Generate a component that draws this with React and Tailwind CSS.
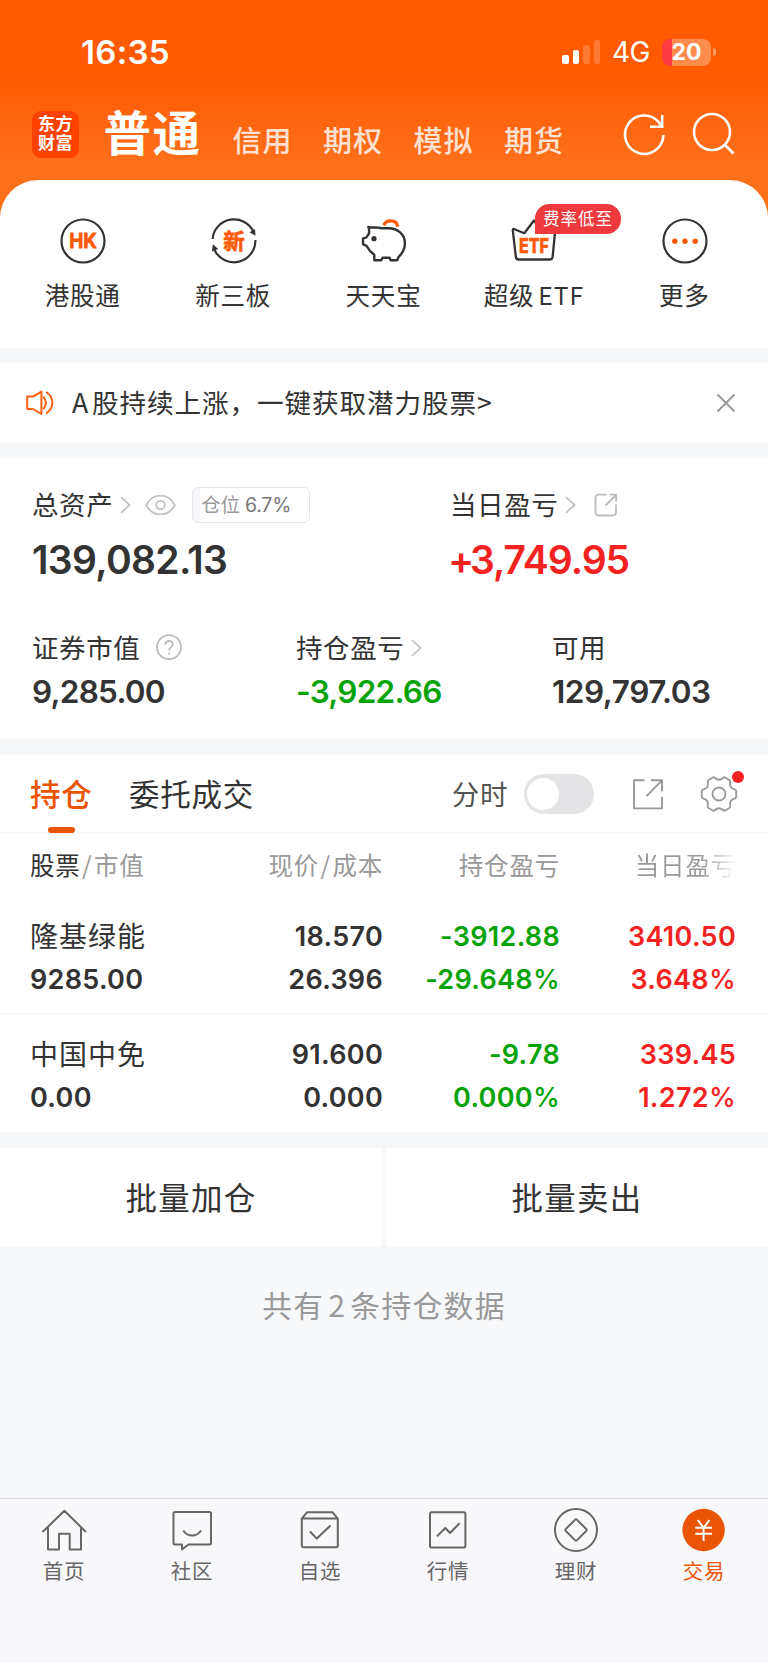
import React from 'react';

const shortcuts = [
  { label: '港股通', icon: <HkIcon /> },
  { label: '新三板', icon: <NewBoardIcon /> },
  { label: '天天宝', icon: <PiggyIcon /> },
  { label: '超级', latin: 'ETF', icon: <EtfIcon />, badge: '费率低至' },
  { label: '更多', icon: <MoreIcon /> },
];

const positions = [
  {
    name: '隆基绿能',
    value: '9285.00',
    price: '18.570',
    cost: '26.396',
    profit: '-3912.88',
    profitRate: '-29.648',
    today: '3410.50',
    todayRate: '3.648',
  },
  {
    name: '中国中免',
    value: '0.00',
    price: '91.600',
    cost: '0.000',
    profit: '-9.78',
    profitRate: '0.000',
    today: '339.45',
    todayRate: '1.272',
  },
];

const navItems = [
  { label: '首页', icon: <HomeIcon /> },
  { label: '社区', icon: <CommunityIcon /> },
  { label: '自选', icon: <WatchlistIcon /> },
  { label: '行情', icon: <MarketIcon /> },
  { label: '理财', icon: <WealthIcon /> },
  { label: '交易', icon: <TradeIcon />, active: true },
];

/* Shortcut icons */
function HkIcon() {
  return (
    <svg className="w-12 h-12" viewBox="0 0 48 48" fill="none">
      <circle cx="24" cy="24" r="21.5" stroke="#333" strokeWidth="2.2" />
      <text x="10.2" y="31.2" textLength="27.6" lengthAdjust="spacingAndGlyphs" fontSize="20" fontWeight="700" fill="#ff5a05" stroke="#ff5a05" strokeWidth="0.8" strokeLinejoin="round" className="font-['Inter',sans-serif]">HK</text>
    </svg>
  );
}

function NewBoardIcon() {
  return (
    <svg className="w-12 h-12" viewBox="0 0 48 48" fill="none">
      <path d="M2.6 22A21.5 21.5 0 0 1 43.4 14.5M45.4 23A21.5 21.5 0 0 1 4.6 33.2" stroke="#333" strokeWidth="2.2" />
      <path d="M39.6 15.2L45 12L45.5 18.8ZM2 34.5L2.8 27.2L8.2 32Z" fill="#333" />
      <text x="13.2" y="31.5" fontSize="21.5" fontWeight="700" fill="#ff5a05" stroke="#ff5a05" strokeWidth="0.6" className="font-['Noto_Sans_CJK_SC',sans-serif]">新</text>
    </svg>
  );
}

function PiggyIcon() {
  return (
    <svg className="w-12 h-12" viewBox="0 0 48 48" fill="none" strokeWidth="2.4" strokeLinejoin="round" strokeLinecap="round">
      <path
        d="M21.5 11.2L18 10.6C14.5 10 11.5 11.2 8.3 9.9C9.4 12.1 9.3 14.3 9 16.5L6.2 20.6L3 21.4V27.2L6.5 28.8C8.3 32.4 10.8 35.4 14.3 37.8V43.2H21.3L22.6 40.8H29.6L30.6 43.2H37.2L38.4 40.2C42 36.7 44.9 32 44.9 26.2C44.9 17.2 37.6 11.2 28.6 11.2Z"
        stroke="#333"
      />
      <circle cx="14" cy="21.7" r="2.6" fill="#333" />
      <path d="M23.8 8.2C25.2 5 28 3.9 31 3.9C34.6 3.9 37.2 6.2 37.8 9.8" stroke="#ff5a05" strokeWidth="3.4" strokeLinecap="butt" />
    </svg>
  );
}

function EtfIcon() {
  return (
    <svg className="w-12 h-12" viewBox="0 0 48 48" fill="none">
      <path d="M4 12L14.3 16.2L24 3.5L33.7 16.2L44 12Q45.4 11.7 45.2 13.5L42.6 40Q42.3 42.5 40 42.5H8.5Q6.2 42.5 5.9 40L2.8 13.5Q2.6 11.6 4 12Z" stroke="#333" strokeWidth="2.3" strokeLinejoin="round" />
      <text x="9" y="35.5" textLength="30" lengthAdjust="spacingAndGlyphs" fontSize="20.5" fontWeight="800" fill="#ff5a05" stroke="#ff5a05" strokeWidth="0.5" strokeLinejoin="round" className="font-['Inter',sans-serif]">ETF</text>
    </svg>
  );
}

function MoreIcon() {
  return (
    <svg className="w-12 h-12" viewBox="0 0 48 48" fill="none">
      <circle cx="24" cy="24" r="21.5" stroke="#333" strokeWidth="2.2" />
      <g fill="#ff5a05">
        <circle cx="13.8" cy="24.2" r="2.7" />
        <circle cx="24" cy="24.2" r="2.7" />
        <circle cx="34.2" cy="24.2" r="2.7" />
      </g>
    </svg>
  );
}

/* Bottom navigation icons */
function HomeIcon() {
  return (
    <svg className="w-12 h-12" viewBox="0 0 48 48" fill="none" stroke="#666" strokeWidth="2" strokeLinejoin="round">
      <path d="M2.5 26L24.4 4.8L46 26M8 21.5V43.5H19V27.8H29.7V43.5H41V21.5" />
    </svg>
  );
}

function CommunityIcon() {
  return (
    <svg className="w-12 h-12" viewBox="0 0 48 48" fill="none" stroke="#666" strokeWidth="2" strokeLinejoin="round">
      <path d="M7 6H41.5Q43 6 43 7.5V37Q43 38.5 41.5 38.5H20.5L14 43.5V38.5H7Q5.5 38.5 5.5 37V7.5Q5.5 6 7 6Z" />
      <path d="M15.3 24.5C19.5 31.2 28.8 31.2 33 24.5" />
    </svg>
  );
}

function WatchlistIcon() {
  return (
    <svg className="w-12 h-12" viewBox="0 0 48 48" fill="none" stroke="#666" strokeWidth="2" strokeLinejoin="round">
      <path d="M5.8 12.6L11 6.3H36.6L41.8 12.6V39.5Q41.8 41.3 40 41.3H7.6Q5.8 41.3 5.8 39.5ZM5.8 12.6H41.8M14 25.5L20.8 32.6L34.5 19.6" />
    </svg>
  );
}

function MarketIcon() {
  return (
    <svg className="w-12 h-12" viewBox="0 0 48 48" fill="none" stroke="#666" strokeWidth="2" strokeLinejoin="round">
      <rect x="6" y="6.2" width="35.4" height="35.2" rx="1.5" />
      <path d="M13 30.4L21.3 22L26 27L35.6 17.2" />
    </svg>
  );
}

function WealthIcon() {
  return (
    <svg className="w-12 h-12" viewBox="0 0 48 48" fill="none" stroke="#666" strokeWidth="2" strokeLinejoin="round">
      <circle cx="24" cy="24" r="21" />
      <path d="M22.9 13.9Q24 12.8 25.1 13.9L34.1 22.9Q35.2 24 34.1 25.1L25.1 34.1Q24 35.2 22.9 34.1L13.9 25.1Q12.8 24 13.9 22.9Z" />
    </svg>
  );
}

function TradeIcon() {
  return (
    <svg className="w-12 h-12" viewBox="0 0 48 48" fill="none">
      <circle cx="23.6" cy="24" r="21.2" fill="#ea5504" />
      <path d="M17.8 14L23.6 22L29.4 14M15.2 21.8H32M15.2 27.8H32M23.6 21.8V35" stroke="#fff" strokeWidth="2" />
    </svg>
  );
}

function Chevron() {
  return (
    <svg className="w-3 h-[18px] shrink-0" viewBox="0 0 12 18" fill="none" stroke="#c4c4c6" strokeWidth="1.8">
      <path d="M1 1.2L9.6 9L1 16.8" />
    </svg>
  );
}

function StatusBar() {
  return (
    <div className="flex h-[103px] items-start justify-between pl-[81px] pr-[52px] pt-8 text-white">
      <span className="text-[33px] leading-10 font-semibold tracking-[0.3px]">16:35</span>
      <div className="flex h-10 items-center">
        <div className="flex h-6 items-end gap-1">
          <span className="h-[9px] w-[6.5px] rounded-xs bg-white" />
          <span className="h-[14px] w-[6.5px] rounded-xs bg-white" />
          <span className="h-[19px] w-[6.5px] rounded-xs bg-white/20" />
          <span className="h-6 w-[6.5px] rounded-xs bg-white/20" />
        </div>
        <span className="ml-[12px] w-[40px] text-[28px] leading-10 whitespace-nowrap tracking-[-0.5px]">4G</span>
        <div className="ml-2.5 flex h-[27px] w-[49px] items-center justify-center overflow-hidden rounded-lg bg-linear-to-r from-[#ff3a41] from-20% to-white/30 to-20% text-[23px] leading-[27px] font-bold">
          20
        </div>
        <span className="ml-0.5 h-2 w-[3px] rounded-r-full bg-white/40" />
      </div>
    </div>
  );
}

function Header() {
  return (
    <header className="h-[222px] bg-linear-to-b from-[#ff5a00] from-35% to-[#ff701a] to-75%">
      <StatusBar />
      <div className="flex h-[62px] items-center pl-8 pr-[31px] text-white">
        <div className="flex h-[47px] w-[47px] flex-col items-center justify-center rounded-[9px] bg-[#ff4200] text-[17px] leading-[19.5px] font-bold tracking-[0.4px]">
          <span>东方</span>
          <span>财富</span>
        </div>
        <span className="ml-[24.5px] w-[103px] text-[47.5px] leading-[60px] font-bold tracking-[1.5px] whitespace-nowrap">普通</span>
        <nav className="ml-[26px] flex gap-[30.5px] pt-[16px] text-[29px] leading-9 font-medium tracking-[1px] text-white/80">
          <span>信用</span>
          <span>期权</span>
          <span>模拟</span>
          <span>期货</span>
        </nav>
        <div className="ml-auto flex gap-[21px]">
          <svg className="w-12 h-12" viewBox="0 0 48 48" fill="none" stroke="#fff" strokeWidth="2.6">
            <path d="M43.4 25A19.2 19.2 0 1 1 38.8 12.2L42 16.6M42.2 5V16.8H30" />
          </svg>
          <svg className="w-12 h-12" viewBox="0 0 48 48" fill="none" stroke="#fff" strokeWidth="2.6">
            <circle cx="23" cy="22" r="18" />
            <path d="M35.5 34.5L44.5 43.5" />
          </svg>
        </div>
      </div>
    </header>
  );
}

function Shortcuts() {
  return (
    <section className="-mt-[42px] grid h-[167.5px] grid-cols-5 rounded-t-[38px] bg-white px-2 pt-[37px]">
      {shortcuts.map((item) => (
        <div key={item.label} className="relative flex flex-col items-center">
          {item.icon}
          <span className="mt-[11px] pr-[1px] font-['Noto_Sans_CJK_SC',sans-serif] text-[24.6px] leading-9 tracking-[0.7px] whitespace-nowrap text-[#333]">
            {item.label}
            {item.latin && <span className="ml-1 tracking-[1px]">{item.latin}</span>}
          </span>
          {item.badge && (
            <span className="absolute -top-[13px] left-[75.5px] flex h-[29.5px] w-[86.5px] items-center justify-center rounded-[14.5px] rounded-bl-none bg-[#ee3a3d] pt-px text-[16.5px] tracking-[1px] text-white">
              {item.badge}
            </span>
          )}
        </div>
      ))}
    </section>
  );
}

function Notice() {
  return (
    <section className="mt-[15.5px] flex h-[79px] items-center bg-white pl-[26px] pr-[32px]">
      <svg className="w-7 h-7" viewBox="0 0 28 28" fill="none" stroke="#ff5f10" strokeWidth="2" strokeLinejoin="round">
        <path d="M1.2 7.6H7L15.4 2.6V25L7 20H1.2ZM17.2 7.6Q22.6 13.8 17.2 20M20 3.2C28.4 8 28.4 19.6 20 24.4" />
      </svg>
      <span className="ml-[18px] pb-[2px] font-['Noto_Sans_CJK_SC',sans-serif] text-[26.6px] leading-9 tracking-[0.9px] whitespace-nowrap text-[#333]">
        A<span className="ml-[3px]">股持续上涨，一键获取潜力股票&gt;</span>
      </span>
      <svg className="ml-auto w-5 h-5" viewBox="0 0 20 20" fill="none" stroke="#999" strokeWidth="1.9">
        <path d="M1.5 1.5L18.5 18.5M18.5 1.5L1.5 18.5" />
      </svg>
    </section>
  );
}

function Assets() {
  return (
    <section className="mt-4 h-[281px] bg-white pl-8 pt-[27px] text-[26.5px] leading-10 tracking-[0.6px] text-[#333]">
      <div className="flex">
        <div className="w-[418px]">
          <div className="flex h-10 items-center">
            <span>总资产</span>
            <span className="ml-[7px] flex"><Chevron /></span>
            <svg className="ml-[13px] h-[22px] w-[31px]" viewBox="0 0 31 22" fill="none" stroke="#c4c4c6" strokeWidth="1.9">
              <path d="M1.2 11C4.4 4.8 9.4 1.6 15.5 1.6S26.6 4.8 29.8 11C26.6 17.2 21.6 20.4 15.5 20.4S4.4 17.2 1.2 11Z" />
              <circle cx="15.5" cy="11" r="4.3" />
            </svg>
            <div className="ml-4 flex h-9 w-[118px] items-center rounded-md border border-[#e6e6ea] bg-linear-to-r from-[#f5f6fa] from-[7px] to-white to-[7px] pl-2 text-[19.5px] tracking-[-0.2px]">
              <span className="text-[#999]">仓位</span>
              <span className="ml-[5px] text-[#777]">6.7%</span>
            </div>
          </div>
          <div className="mt-[9.5px] text-[39px] leading-[50px] font-semibold tracking-[-0.65px]">139,082.13</div>
        </div>
        <div>
          <div className="flex h-10 items-center">
            <span>当日盈亏</span>
            <span className="ml-[7px] flex"><Chevron /></span>
            <svg className="ml-[17px] h-6 w-6" viewBox="0 0 24 24" fill="none" stroke="#bbb" strokeWidth="1.8">
              <path d="M12.5 1.7H5Q1.5 1.7 1.5 5V19Q1.5 22.5 5 22.5H18.5Q22 22.5 22 19V11.5M11.5 12.5L22 2M15.5 1.7H22.2V8.5" />
            </svg>
          </div>
          <div className="mt-[9.5px] -ml-[2px] text-[39px] leading-[50px] font-semibold tracking-[-1px] text-[#f52222]">
            <span className="tracking-[-4.2px]">+</span>
            <span>3,749.95</span>
          </div>
        </div>
      </div>
      <div className="mt-[43px] flex">
        <div className="w-[264px]">
          <div className="flex h-10 items-center">
            <span>证券市值</span>
            <svg className="ml-4 h-[27px] w-[27px]" viewBox="0 0 27 27" fill="none" stroke="#bbb" strokeWidth="1.8">
              <circle cx="13" cy="13.2" r="12" />
              <path d="M9.4 10.8C9.4 5.8 16.8 5.8 16.8 10.4C16.8 13.4 13.1 13.2 13.1 16.6M13.1 18.4V20.4" />
            </svg>
          </div>
          <div className="mt-1 text-[31.5px] font-semibold tracking-[-0.75px]">9,285.00</div>
        </div>
        <div className="w-64">
          <div className="flex h-10 items-center">
            <span>持仓盈亏</span>
            <span className="ml-[7px] flex"><Chevron /></span>
          </div>
          <div className="mt-1 text-[31.5px] font-semibold tracking-[-0.75px] text-[#06a306]">-3,922.66</div>
        </div>
        <div>
          <div className="h-10">可用</div>
          <div className="mt-1 text-[31.5px] font-semibold tracking-[-0.45px]">129,797.03</div>
        </div>
      </div>
    </section>
  );
}

function PositionTabs() {
  return (
    <div className="flex h-[79px] items-center border-b-2 border-[#f7f7f9] pl-[30px] pr-[30px] text-[#333]">
      <div className="relative flex h-[79px] items-center pt-[3px] text-[30.5px] font-medium tracking-[0.8px] text-[#ea5504]">
        持仓
        <span className="absolute bottom-0 left-[17.5px] h-1.5 w-[27.5px] rounded-full bg-[#ea5504]" />
      </div>
      <span className="ml-[36.5px] pt-[3px] text-[30.5px] tracking-[0.7px]">委托成交</span>
      <span className="ml-auto pt-1 text-[27.5px] tracking-[0.9px] text-[#555]">分时</span>
      <span className="ml-[15px] mt-px flex h-10 w-[70.5px] items-center rounded-full bg-[#e4e4e6] px-[3.5px]">
        <span className="h-8 w-8 rounded-full bg-white" />
      </span>
      <svg className="ml-[38px] h-8 w-8" viewBox="0 0 32 32" fill="none" stroke="#999" strokeWidth="1.9">
        <path d="M12.5 2.2H2V30.4H30V18.8M14.5 18.2L29.8 2.6M19 2.2H30V13.5" strokeLinejoin="round" />
      </svg>
      <div className="relative ml-9 h-[38px] w-[38px]">
        <svg className="h-[38px] w-[38px]" viewBox="0 0 38 38" fill="none" stroke="#999" strokeWidth="1.9" strokeLinejoin="round">
          <path d="M12.8 2.5Q14 2 15 3Q19 6.6 23 3Q24 2 25.2 2.5L29.4 5Q30.6 5.8 30.3 7.2C29.4 11.2 31 13.6 34.6 14.4Q36.2 14.8 36.2 16.2V21.8Q36.2 23.2 34.6 23.6C31 24.4 29.4 26.8 30.3 30.8Q30.6 32.2 29.4 33L25.2 35.5Q24 36 23 35Q19 31.4 15 35Q14 36 12.8 35.5L8.6 33Q7.4 32.2 7.7 30.8C8.6 26.8 7 24.4 3.4 23.6Q1.8 23.2 1.8 21.8V16.2Q1.8 14.8 3.4 14.4C7 13.6 8.6 11.2 7.7 7.2Q7.4 5.8 8.6 5Z" />
          <circle cx="19" cy="19" r="6.5" />
        </svg>
        <span className="absolute -top-1 left-[32px] h-3 w-3 rounded-full bg-[#f52222]" />
      </div>
    </div>
  );
}

function PositionRow({ item }) {
  return (
    <div className="grid h-[118px] grid-cols-[150px_1fr_177px_176px] border-b-2 border-[#f7f7f9] pl-[30px] pr-8 pt-[19px] text-right text-[27px] leading-[42.5px] font-semibold tracking-[0.3px] text-[#333] last:border-b-0">
      <div className="text-left">
        <div className="text-[28px] font-normal tracking-[1px]">{item.name}</div>
        <div>{item.value}</div>
      </div>
      <div>
        <div>{item.price}</div>
        <div>{item.cost}</div>
      </div>
      <div className="text-[#06a306]">
        <div>{item.profit}</div>
        <div>{item.profitRate}<span className="font-medium">%</span></div>
      </div>
      <div className="text-[#f52222]">
        <div>{item.today}</div>
        <div>{item.todayRate}<span className="font-medium">%</span></div>
      </div>
    </div>
  );
}

function Positions() {
  return (
    <section className="mt-4 h-[377px] bg-white">
      <PositionTabs />
      <div className="grid h-[63px] grid-cols-[150px_1fr_177px_176px] items-center pb-px pl-[30px] pr-8 text-right font-['Noto_Sans_CJK_SC',sans-serif] text-[24.5px] leading-9 tracking-[0.8px] text-[#999]">
        <span className="text-left"><span className="text-[#333]">股票</span><span className="mx-[1.5px]">/</span>市值</span>
        <span>现价<span className="mx-[1.5px]">/</span>成本</span>
        <span>持仓盈亏</span>
        <span className="bg-linear-to-r from-[#999] from-80% to-transparent bg-clip-text text-transparent">当日盈亏</span>
      </div>
      {positions.map((item) => (
        <PositionRow key={item.name} item={item} />
      ))}
    </section>
  );
}

function BottomNav() {
  return (
    <nav className="mt-auto grid h-[165px] grid-cols-6 border-t border-[#dcdce0] bg-[#f8f8fb] pt-[7px]">
      {navItems.map((item) => (
        <div key={item.label} className={`flex flex-col items-center ${item.active ? 'text-[#ea5504]' : 'text-[#666]'}`}>
          {item.icon}
          <span className="mt-0.5 text-[20.5px] leading-8 tracking-[0.8px]">{item.label}</span>
        </div>
      ))}
    </nav>
  );
}

function App() {
  return (
    <div className="flex h-[1663px] w-[768px] flex-col overflow-hidden bg-[#f7f8fa] font-['Inter','Noto_Sans_CJK_SC',sans-serif]">
      <Header />
      <Shortcuts />
      <Notice />
      <Assets />
      <Positions />
      <div className="mt-4 grid h-[99px] grid-cols-2 gap-1 text-center text-[31.5px] leading-[97px] tracking-[1.2px] text-[#333]">
        <button className="bg-white pt-0.5">批量加仓</button>
        <button className="bg-white pt-0.5">批量卖出</button>
      </div>
      <p className="mt-[35px] text-center font-['Noto_Sans_CJK_SC',sans-serif] text-[29.8px] leading-11 tracking-[1.3px] text-[#999]">
        共有<span className="mx-[4px]">2</span>条持仓数据
      </p>
      <BottomNav />
    </div>
  );
}

export default App;
